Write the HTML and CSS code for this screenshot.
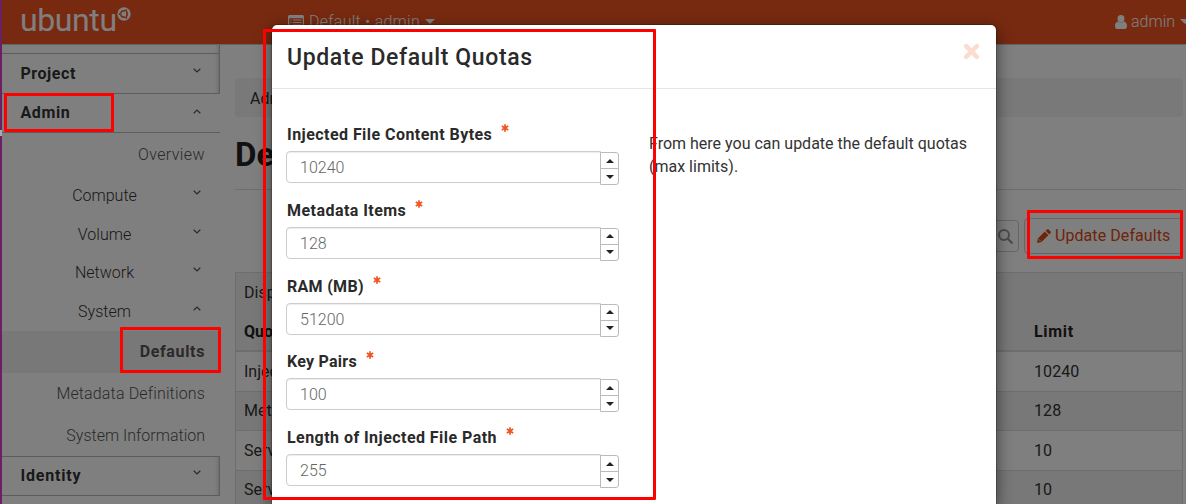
FILE: index.html
```html
<!DOCTYPE html>
<html lang="en">
<head>
<meta charset="utf-8">
<title>Update Default Quotas</title>
<link rel="stylesheet" href="styles.css">
</head>
<body>
<svg width="0" height="0" class="defs">
  <symbol id="down" viewBox="0 0 8 5"><path d="M.7.8 4 4 7.3.8" fill="none" stroke="currentColor" stroke-width="1.2"/></symbol>
  <symbol id="up" viewBox="0 0 8 5"><path d="M.7 4.2 4 1 7.3 4.2" fill="none" stroke="currentColor" stroke-width="1.2"/></symbol>
</svg>
<div class="page">
  <header class="topbar">
    <div class="logo"><span>ubuntu</span>
      <svg class="mark" width="14" height="14" viewBox="0 0 14 14"><circle cx="7" cy="7" r="6.700" fill="#fff"/><circle cx="7" cy="7" r="3.200" fill="none" stroke="#ee5420" stroke-width="1.600"/><path d="M7 7 1.500 7M7 7l3-5M7 7l3 5" stroke="#fff" stroke-width=".8"/><g fill="#ee5420"><circle cx="2.700" cy="7" r="1"/><circle cx="9.200" cy="3.200" r="1"/><circle cx="9.200" cy="10.800" r="1"/></g><circle cx="7" cy="7" r="1.900" fill="#fff"/></svg>
    </div>
    <div class="context">
      <svg width="16" height="13" viewBox="0 0 16 13"><path d="M1.500 0h13A1.500 1.500 0 0 1 16 1.500v10a1.500 1.500 0 0 1-1.500 1.500h-13A1.500 1.500 0 0 1 0 11.500v-10A1.500 1.500 0 0 1 1.500 0zM1.200 3.200v8.500h13.600V3.200z" fill="#fff" fill-rule="evenodd"/><path d="M2.500 5h1M5 5h8.500M2.500 7.500h1M5 7.500h8.500M2.500 10h1M5 10h8.500" stroke="#fff" stroke-width="1.100"/></svg>
      <span class="ctx-text">Default • admin</span><i class="caret"></i>
    </div>
    <div class="user">
      <svg width="12" height="14" viewBox="0 0 12 14"><path d="M6 0a3.300 3.500 0 0 1 0 7.400A3.300 3.500 0 0 1 6 0zM3 6.500a4 4 0 0 0 6 0c2.200.3 3 2.500 3 4.800 0 1.500-.8 2.700-2.300 2.700H2.300C.8 14 0 12.800 0 11.300 0 9 .8 6.800 3 6.500z" fill="#fff"/></svg>
      <span class="user-text">admin</span><i class="caret"></i>
    </div>
  </header>
  <div class="columns">
    <nav class="sidebar">
      <div class="strip"></div>
      <div class="panel"><b class="t-project">Project</b><svg class="chev"><use href="#down"/></svg></div>
      <div class="panel open"><b class="t-admin">Admin</b><svg class="chev"><use href="#up"/></svg></div>
      <div class="leaf overview"><span class="t-overview">Overview</span></div>
      <div class="group"><span>Compute</span><svg class="chev"><use href="#down"/></svg></div>
      <div class="group"><span>Volume</span><svg class="chev"><use href="#down"/></svg></div>
      <div class="group"><span>Network</span><svg class="chev"><use href="#down"/></svg></div>
      <div class="group"><span>System</span><svg class="chev"><use href="#up"/></svg></div>
      <div class="leaf active"><b class="t-defaults">Defaults</b></div>
      <div class="leaf"><span class="t-meta">Metadata Definitions</span></div>
      <div class="leaf"><span>System Information</span></div>
      <div class="panel identity"><b class="t-identity">Identity</b><svg class="chev"><use href="#down"/></svg></div>
    </nav>
    <main class="content">
      <div class="breadcrumb">Adm</div>
      <h1>Def</h1>
      <div class="actions">
        <div class="search"><svg width="17" height="17" viewBox="0 0 17 17"><circle cx="7" cy="7" r="5" fill="none" stroke="#999" stroke-width="2"/><path d="m10.800 10.800 4 4" stroke="#999" stroke-width="2.300" stroke-linecap="round"/></svg></div>
        <div class="update"><svg width="14" height="14" viewBox="0 0 14 14"><path d="M0 14 .9 9.500 7.800 2.600 11.400 6.200 4.500 13.100zM8.600 1.800 10 .4q.8-.7 1.600 0l2 2q.7.8 0 1.600L12.200 5.400z" fill="#dd4814"/><path d="m1.800 10.300 2 2" stroke="#fff" stroke-width=".8"/></svg><span class="t-update">Update Defaults</span></div>
      </div>
      <div class="table">
        <div class="row caption"><span>Displ</span></div>
        <div class="row head"><span>Quota</span><span class="limit">Limit</span></div>
        <div class="row"><span>Injec</span><span class="limit">10240</span></div>
        <div class="row odd"><span>Meta</span><span class="limit">128</span></div>
        <div class="row"><span>Serve</span><span class="limit">10</span></div>
        <div class="row odd last"><span>Serve</span><span class="limit">10</span></div>
      </div>
    </main>
  </div>
</div>
<div class="backdrop"></div>
<div class="edge"></div>
<section class="modal">
  <div class="modal-head">
    <h2>Update Default Quotas</h2>
    <svg class="close" viewBox="0 0 17 17"><path d="m3.200 3.200 10.600 10.600M13.800 3.200 3.200 13.800" stroke="#fbdcd0" stroke-width="4.600" stroke-linecap="round"/></svg>
  </div>
  <div class="modal-body">
    <form class="fields">
      <div class="field"><label><span class="l-bytes">Injected File Content Bytes</span><svg class="req" viewBox="0 0 8 8"><path d="M4 .3v7.400M.8 2.100l6.400 3.800M7.200 2.100.8 5.900"/></svg></label><div class="number"><div class="input">10240</div><div class="spin"><i class="inc"></i><i class="dec"></i></div></div></div>
      <div class="field"><label><span class="l-meta">Metadata Items</span><svg class="req" viewBox="0 0 8 8"><path d="M4 .3v7.400M.8 2.100l6.400 3.800M7.200 2.100.8 5.900"/></svg></label><div class="number"><div class="input">128</div><div class="spin"><i class="inc"></i><i class="dec"></i></div></div></div>
      <div class="field"><label><span class="l-ram">RAM (MB)</span><svg class="req" viewBox="0 0 8 8"><path d="M4 .3v7.400M.8 2.100l6.400 3.800M7.200 2.100.8 5.900"/></svg></label><div class="number"><div class="input">51200</div><div class="spin"><i class="inc"></i><i class="dec"></i></div></div></div>
      <div class="field"><label><span class="l-key">Key Pairs</span><svg class="req" viewBox="0 0 8 8"><path d="M4 .3v7.400M.8 2.100l6.400 3.800M7.200 2.100.8 5.900"/></svg></label><div class="number"><div class="input">100</div><div class="spin"><i class="inc"></i><i class="dec"></i></div></div></div>
      <div class="field"><label><span class="l-path">Length of Injected File Path</span><svg class="req" viewBox="0 0 8 8"><path d="M4 .3v7.400M.8 2.100l6.400 3.800M7.200 2.100.8 5.900"/></svg></label><div class="number"><div class="input">255</div><div class="spin"><i class="inc"></i><i class="dec"></i></div></div></div>
    </form>
    <p class="help"><span>From here you can update the default quotas</span><br><span>(max limits).</span></p>
  </div>
</section>
<div class="callout c-admin"></div>
<div class="callout c-defaults"></div>
<div class="callout c-modal"></div>
<div class="callout c-update"></div>
</body>
</html>
```

FILE: styles.css
```css
* { box-sizing: border-box; }
html { overflow: hidden; }
body { margin: 0; width: 1186px; height: 504px; overflow: hidden; position: relative; background: #fff; color: #333; font: 16px/20px Roboto, "Open Sans", sans-serif; }
span, b { white-space: nowrap; }
b { font-weight: 700; }
.defs { position: absolute; }
.page { width: 1186px; height: 504px; overflow: hidden; }

.topbar { height: 45px; background: #ee5420; border-bottom: 1px solid #c0cbd0; display: flex; color: #fff; font-weight: 300; }
.logo { display: flex; flex: none; width: 288px; padding-left: 20px; align-items: flex-start; font-size: 32px; line-height: 38px; font-weight: 400; }
.logo span { width: 97px; padding-top: 1px; letter-spacing: -.4px; }
.mark { margin-top: 7px; }
.context, .user { display: flex; align-items: center; height: 42px; }
.context { width: 827px; flex: none; }
.user { flex: none; width: 71px; overflow: hidden; padding-top: 1px; }
.ctx-text { margin: 2px 0 0 5px; width: 111px; letter-spacing: .25px; }
.user svg, .caret { flex: none; }
.user-text { margin-left: 4px; width: 44px; flex: none; }
.caret { border: 5px solid transparent; border-top-color: #fff; border-bottom: 0; margin-left: 5px; }

.columns { display: flex; height: 459px; overflow: hidden; }
.sidebar { width: 220px; height: 459px; flex: none; }
.strip { height: 8px; border-right: 1px solid #bbb; box-shadow: inset -4px 0 5px -4px #bbb; }
.panel { height: 41px; border: 1px solid #bbb; border-left: 0; padding: 0 18px 0 20.500px; display: flex; justify-content: space-between; align-items: center; box-shadow: inset -4px 0 5px -4px #bbb; }
.panel.open { height: 39px; border-top: 0; border-right: 0; padding-right: 19px; box-shadow: none; }
.chev { width: 8px; height: 5px; margin-top: -7px; color: #555; }
.panel.open .chev { margin-top: -3px; }
.group { height: 38.700px; display: flex; align-items: center; justify-content: space-between; padding: 1px 19px 0 0; }
.group span { width: 209px; text-align: center; margin-right: -17px; }
.group, .leaf { font-weight: 300; }
.leaf { height: 41.500px; display: flex; align-items: center; justify-content: flex-end; padding: 1px 15px 0 0; color: #555; }
.overview { height: 43px; }
.active { background: #f0f0f0; color: #555; height: 42px; }
.panel.identity { height: 40px; }
.t-project { letter-spacing: .55px; }
.t-admin { letter-spacing: .6px; }
.t-overview { letter-spacing: .4px; }
.t-defaults { letter-spacing: .65px; }
.t-meta { letter-spacing: .15px; }
.t-identity { letter-spacing: .8px; }

.content { width: 966px; flex: none; padding: 33px 3px 0 15px; }
.breadcrumb { height: 39px; padding: 11px 15px 0; border-radius: 4px; background: #f2f2f2; }
h1 { margin: 18px 0 0; font-size: 33px; line-height: 40px; height: 55px; border-bottom: 1px solid #ddd; color: #222; }
.actions { display: flex; justify-content: flex-end; height: 82px; padding-top: 28px; gap: 5px; }
.search { width: 200px; height: 32px; margin-top: 2px; border: 1px solid #ccc; border-radius: 4px; display: flex; justify-content: flex-end; align-items: center; padding-right: 4px; }
.update { width: 159px; height: 36px; border: 1px solid #ccc; border-radius: 4px; color: #dd4814; display: flex; align-items: center; padding-left: 12px; gap: 4px; }
.t-update { letter-spacing: .07px; }
.table { border: 1px solid #ddd; border-bottom: 0; }
.row { height: 39.500px; border-top: 1px solid #ddd; display: flex; align-items: center; padding: 1px 0 0 8px; background: #fff; }
.row span { width: 790px; flex: none; }
.row .limit { width: auto; letter-spacing: .1px; }
.caption, .head, .odd { background: #f0f0f0; }
.caption, .head { border: 0; height: 38.500px; }
.head { height: 39.500px; padding-top: 2px; font-weight: 700; color: #222; border-bottom: 1px solid #ddd; }
.head .limit { letter-spacing: .7px; }

.backdrop { position: absolute; inset: 0; background: rgba(0,0,0,.5); }
.edge { position: absolute; left: 0; top: 0; width: 2px; height: 504px; background: linear-gradient(#6b2063 0 130px, #aaa 130px 136px, #6b2063 136px); }

.modal { position: absolute; left: 271px; top: 24px; width: 726px; height: 480px; background: #fff; border: 1px solid rgba(0,0,0,.2); border-bottom: 0; background-clip: padding-box; border-radius: 6px 6px 0 0; box-shadow: 0 5px 15px rgba(0,0,0,.5); }
.modal-head { height: 64px; border-bottom: 1px solid #e5e5e5; display: flex; justify-content: space-between; padding: 18px 16px 0 15px; }
h2 { margin: 1px 0 0; font-size: 23px; line-height: 28px; font-weight: 500; color: #2a2a2a; letter-spacing: .63px; }
.close { width: 17px; height: 17px; }
.modal-body { display: flex; padding: 35px 14px 0; }
.fields { width: 363px; flex: none; }
.field { height: 75.800px; }
label { display: flex; align-items: flex-start; height: 27px; padding: 1px 0 0 1px; font-weight: 700; color: #2a2a2a; }
.l-bytes, .l-meta, .l-path { letter-spacing: .45px; }
.l-ram { letter-spacing: .3px; }
.l-key { letter-spacing: .25px; }
.req { width: 8px; height: 8px; margin: -1px 0 0 9px; fill: none; stroke: #ee5420; stroke-width: 1.700; }
.number { display: flex; align-items: flex-start; }
.input { width: 315px; height: 32px; border: 1px solid #ccc; border-radius: 4px 0 0 4px; padding: 6px 13px 0; color: #666; font-weight: 300; box-shadow: inset 0 1px 1px rgba(0,0,0,.075); }
.spin { margin: 1px 0 0 -1px; width: 19px; display: flex; flex-direction: column; }
.spin i { height: 17px; border: 1px solid #bbb; background: #fff; display: grid; place-items: center; }
.spin i + i { margin-top: -1px; }
.inc { border-radius: 0 3px 0 0; }
.dec { border-radius: 0 0 3px 0; }
.inc::before, .dec::before { content: ""; border: 4px solid transparent; }
.inc::before { border-bottom-color: #222; border-top: 0; }
.dec::before { border-top-color: #222; border-bottom: 0; }
.help { margin: 8px 0 0; line-height: 23px; }

.callout { position: absolute; border: 3px solid #f00; border-radius: 1px; }
.c-admin { left: 4px; top: 93px; width: 110px; height: 39px; }
.c-defaults { left: 120px; top: 327px; width: 101px; height: 46px; }
.c-modal { left: 263px; top: 29px; width: 393px; height: 471px; }
.c-update { left: 1027px; top: 210px; width: 156px; height: 49px; }
```
